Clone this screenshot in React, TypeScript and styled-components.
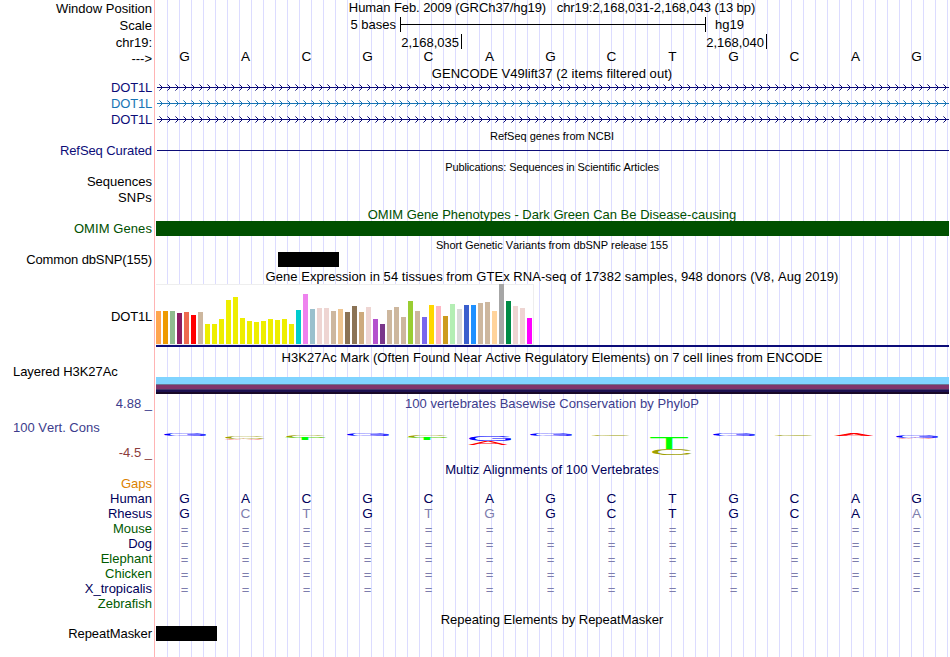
import React from 'react';
import styled, { createGlobalStyle } from 'styled-components';

const GlobalStyle = createGlobalStyle`
  body {
    margin: 0;
    background: #fff;
    overflow: hidden;
  }
`;

const Browser = styled.main`
  width: 949px;
  height: 657px;
  overflow: hidden;
  font: 13px 'Liberation Sans', Arial, sans-serif;
  font-kerning: none;
  color: #000;
  background:
    linear-gradient(#ffb4b4, #ffb4b4) 154px 0 / 1px 100% no-repeat,
    linear-gradient(#fff, #fff) 0 0 / 156px 100% no-repeat,
    linear-gradient(to right, #dcdcff 1px, transparent 1px) 11px 0 / 12px 100%;
`;

const Row = styled.div<{ $h: number }>`
  display: grid;
  grid-template-columns: 156px 793px;
  height: ${(p) => p.$h}px;
`;

const Label = styled.div<{ $lh?: number; $color?: string; $left?: boolean; $ls?: number }>`
  box-sizing: border-box;
  padding: ${(p) => (p.$left ? '0 0 0 13px' : '0 4px 0 0')};
  text-align: ${(p) => (p.$left ? 'left' : 'right')};
  line-height: ${(p) => p.$lh || 15}px;
  letter-spacing: ${(p) => p.$ls || 0}px;
  color: ${(p) => p.$color || '#000'};
  white-space: pre;
`;

const Title = styled.div<{ $lh?: number; $color?: string; $small?: boolean; $ls?: number }>`
  margin-left: -1px;
  text-align: center;
  font-size: ${(p) => (p.$small ? 11 : 13)}px;
  line-height: ${(p) => p.$lh || 15}px;
  letter-spacing: ${(p) => p.$ls || 0}px;
  color: ${(p) => p.$color || '#000'};
  white-space: pre;
`;

const ScaleBar = styled.div`
  display: flex;
  line-height: 15px;
`;

const ScaleText = styled.span<{ $w?: number }>`
  width: ${(p) => (p.$w ? p.$w + 'px' : 'auto')};
  text-align: right;
`;

const Ruler = styled.div`
  box-sizing: border-box;
  width: 306px;
  height: 15px;
  margin: 0 9px 0 4px;
  border: solid #000;
  border-width: 0 1px;
  background: linear-gradient(#000, #000) 0 7px / 100% 1px no-repeat;
`;

const Ticks = styled.div`
  display: flex;
`;

const Tick = styled.div<{ $w: number }>`
  box-sizing: border-box;
  width: ${(p) => p.$w}px;
  height: 15px;
  padding-right: 2px;
  border-right: 1px solid #000;
  line-height: 18px;
  text-align: right;
`;

const BaseGrid = styled.div<{ $lh: number; $color?: string; $size?: number }>`
  display: grid;
  grid-template-columns: repeat(13, 61px);
  margin-left: -2px;
  text-align: center;
  font-size: ${(p) => p.$size || 13.6}px;
  line-height: ${(p) => p.$lh}px;
  color: ${(p) => p.$color || '#000'};
`;

const Base = styled.span<{ $faded?: boolean }>`
  color: ${(p) => (p.$faded ? '#7d7dad' : 'inherit')};
`;

const IntronLine = styled.div`
  height: 1px;
  margin: 7px 0 0 1px;
  background: #0c0c78;
`;

const Block = styled.div<{ $x?: number; $w?: number; $color?: string }>`
  height: 15px;
  margin-left: ${(p) => p.$x || 0}px;
  width: ${(p) => p.$w || 793}px;
  background: ${(p) => p.$color || '#000'};
`;

const Expression = styled.div`
  height: 61px;
  border-bottom: 2px solid #0c0c78;
`;

const Bars = styled.div`
  box-sizing: border-box;
  display: flex;
  align-items: flex-end;
  gap: 2px;
  width: 378px;
  height: 61px;
  border: solid #eee;
  border-width: 1px 1px 1px 0;
  background: #fff;
`;

const Bar = styled.i<{ $h: number; $color: string }>`
  flex: none;
  width: 5px;
  height: ${(p) => p.$h}px;
  background: ${(p) => p.$color};
`;

const Layers = styled.div`
  height: 17px;
  margin-top: 12px;
  background: linear-gradient(
    #80d4ff 7px, #6b7894 7px, #6b7894 8px, #80356b 8px, #80356b 12px,
    #453768 12px, #453768 13px, #1c1050 13px, #1c1050 15px, #180828 15px
  );
`;

const SideLabels = styled.div`
  display: flex;
  flex-direction: column;
  gap: 10px;
  padding-top: 9px;
`;

const Drawing = styled.svg`
  display: block;
`;

const SEQUENCE = 'GACGCAGCTGCAG';
const RHESUS = 'GCTGTGGCTGCAA';

const GENES = ['#0c0c78', '#1874b4', '#0c0c78'];

const TISSUES: [number, string][] = [
  [33, '#ffa54f'], [33, '#ee9a00'], [33, '#8fbc8f'], [31, '#8b1c62'],
  [32, '#ee6a50'], [29, '#ff0000'], [32, '#cdb79e'], [20, '#eeee00'],
  [20, '#eeee00'], [25, '#eeee00'], [44, '#eeee00'], [47, '#eeee00'],
  [26, '#eeee00'], [23, '#eeee00'], [22, '#eeee00'], [23, '#eeee00'],
  [25, '#eeee00'], [24, '#eeee00'], [25, '#eeee00'], [20, '#eeee00'],
  [34, '#00cdcd'], [50, '#ee82ee'], [35, '#9ac0cd'], [36, '#eed5d2'],
  [36, '#eed5d2'], [33, '#cdb79e'], [35, '#eec591'], [32, '#8b7355'],
  [38, '#8b7355'], [32, '#cdaa7d'], [37, '#eed5d2'], [25, '#b452cd'],
  [20, '#7a378b'], [34, '#cdb79e'], [37, '#cdb79e'], [27, '#cdb79e'],
  [43, '#9acd32'], [33, '#cdb79e'], [27, '#7a67ee'], [39, '#ffd700'],
  [38, '#ffb6c1'], [28, '#cd9b1d'], [40, '#b4eeb4'], [35, '#d9d9d9'],
  [39, '#3a5fcd'], [39, '#1e90ff'], [41, '#cdb79e'], [42, '#cdb79e'],
  [33, '#ffd39b'], [60, '#a6a6a6'], [43, '#008b45'], [38, '#eed5d2'],
  [36, '#eed5d2'], [26, '#ff00ff'],
];

// letter, left, top, width, height inside the conservation track
const LOGO: [string, number, number, number, number][] = [
  ['G', 8, 23, 43, 2],
  ['C', 69, 25, 40, 2.8],
  ['A', 68, 27.8, 40, 1.3],
  ['C', 130, 24.6, 40, 2.3],
  ['T', 129, 26.8, 40, 2.2],
  ['G', 191, 23, 43, 2],
  ['C', 252, 24.6, 40, 2.3],
  ['T', 251, 26.8, 40, 2.2],
  ['G', 313, 25, 43, 5],
  ['A', 312, 30.3, 40, 3.7],
  ['G', 374, 23, 43, 2],
  ['C', 436, 24, 39, 1],
  ['T', 494, 26, 38, 12],
  ['C', 496, 38.2, 40, 5.8],
  ['G', 557, 23, 43, 2],
  ['C', 619, 24, 39, 1],
  ['A', 678, 23, 40, 1.9],
  ['G', 740, 25, 43, 2],
  ['A', 741, 27, 38, 1],
];

// ink box of each capital at font-size 100: left, width, rise, height
const INK: Record<string, [number, number, number, number]> = {
  G: [5, 67, 70, 71],
  C: [5, 64, 70, 71],
  A: [0, 67, 69, 69],
  T: [2, 57, 69, 69],
};

const LOGO_COLORS: Record<string, string> = {
  G: '#0000ff',
  C: '#a0a000',
  A: '#ff0000',
  T: '#00ff00',
};

const NAVY = '#00005a';
const GREEN = '#005a00';

const SPECIES: [string, string][] = [
  ['Mouse', GREEN],
  ['Dog', NAVY],
  ['Elephant', GREEN],
  ['Chicken', GREEN],
  ['X_tropicalis', NAVY],
];

const Gene = ({ color }: { color: string }) => (
  <Drawing width='793' height='16' shapeRendering='crispEdges' fill={color}>
    <rect x='1' y='7' width='792' height='1' />
    {Array.from({ length: 99 }, (_, i) => (
      <g key={i} transform={`translate(${3 + i * 8} 0)`}>
        <path d='M1 5h1v1h1v1h-1v-1h-1zM2 8h1v1h-1v1h-1v-1h1z' />
        <path d='M0 4h1v1h-1zM0 10h1v1h-1z' opacity='0.6' />
      </g>
    ))}
  </Drawing>
);

const Logo = () => (
  <Drawing width='793' height='51' fontSize='100'>
    {LOGO.map(([letter, x, y, w, h], i) => {
      const [left, width, rise, height] = INK[letter];
      const sx = w / width;
      const sy = h / height;
      return (
        <text
          key={i}
          fill={LOGO_COLORS[letter]}
          transform={`translate(${x - left * sx} ${y + rise * sy}) scale(${sx} ${sy})`}
        >
          {letter}
        </text>
      );
    })}
  </Drawing>
);

const App = () => {
  return (
    <>
      <GlobalStyle />
      <Browser>
        <Row $h={17}>
          <Label $lh={17}>Window Position</Label>
          <Title $ls={-0.075}>Human Feb. 2009 (GRCh37/hg19)   chr19:2,168,031-2,168,043 (13 bp)</Title>
        </Row>
        <Row $h={17}>
          <Label $lh={17}>Scale</Label>
          <ScaleBar>
            <ScaleText $w={240}>5 bases</ScaleText>
            <Ruler />
            <ScaleText>hg19</ScaleText>
          </ScaleBar>
        </Row>
        <Row $h={17}>
          <Label $lh={17}>chr19:</Label>
          <Ticks>
            <Tick $w={306}>2,168,035</Tick>
            <Tick $w={305}>2,168,040</Tick>
          </Ticks>
        </Row>
        <Row $h={15}>
          <Label>---&gt;</Label>
          <BaseGrid $lh={11}>
            {SEQUENCE.split('').map((b, i) => (
              <Base key={i}>{b}</Base>
            ))}
          </BaseGrid>
        </Row>
        <Row $h={14}>
          <span />
          <Title $ls={0.05}>GENCODE V49lift37 (2 items filtered out)</Title>
        </Row>
        {GENES.map((color, i) => (
          <Row key={i} $h={16}>
            <Label $color={color} $ls={-0.2}>DOT1L</Label>
            <Gene color={color} />
          </Row>
        ))}
        <Row $h={15}>
          <span />
          <Title $small $lh={16}>RefSeq genes from NCBI</Title>
        </Row>
        <Row $h={16}>
          <Label $color='#0c0c78' $ls={-0.08}>RefSeq Curated</Label>
          <IntronLine />
        </Row>
        <Row $h={15}>
          <span />
          <Title $small $lh={16} $ls={-0.1}>Publications: Sequences in Scientific Articles</Title>
        </Row>
        <Row $h={16}>
          <Label>Sequences</Label>
        </Row>
        <Row $h={16}>
          <Label $ls={0.2}>SNPs</Label>
        </Row>
        <Row $h={15}>
          <span />
          <Title $lh={17} $color='#005000'>OMIM Gene Phenotypes - Dark Green Can Be Disease-causing</Title>
        </Row>
        <Row $h={16}>
          <Label $color='#005000' $ls={0.08}>OMIM Genes</Label>
          <Block $color='#005000' />
        </Row>
        <Row $h={15}>
          <span />
          <Title $small $lh={17} $ls={-0.05}>Short Genetic Variants from dbSNP release 155</Title>
        </Row>
        <Row $h={16}>
          <Label $ls={-0.12}>Common dbSNP(155)</Label>
          <Block $x={122} $w={61} />
        </Row>
        <Row $h={16}>
          <span />
          <Title $lh={17} $ls={0.055}>Gene Expression in 54 tissues from GTEx RNA-seq of 17382 samples, 948 donors (V8, Aug 2019)</Title>
        </Row>
        <Row $h={66}>
          <Label $lh={65} $ls={-0.2}>DOT1L</Label>
          <Expression>
            <Bars>
              {TISSUES.map(([h, color], i) => (
                <Bar key={i} $h={h} $color={color} />
              ))}
            </Bars>
          </Expression>
        </Row>
        <Row $h={15}>
          <span />
          <Title $ls={0.03}>H3K27Ac Mark (Often Found Near Active Regulatory Elements) on 7 cell lines from ENCODE</Title>
        </Row>
        <Row $h={31}>
          <Label $left $lh={13} $ls={-0.05}>Layered H3K27Ac</Label>
          <Layers />
        </Row>
        <Row $h={15}>
          <Label $color='#3c3c8c'>4.88 _</Label>
          <Title $color='#3c3c8c' $ls={0.04}>100 vertebrates Basewise Conservation by PhyloP</Title>
        </Row>
        <Row $h={50}>
          <SideLabels>
            <Label $left $color='#3c3c8c'>100 Vert. Cons</Label>
            <Label $color='#8c3c3c'>-4.5 _</Label>
          </SideLabels>
          <Logo />
        </Row>
        <Row $h={15}>
          <span />
          <Title $lh={17} $color={NAVY} $ls={0.03}>Multiz Alignments of 100 Vertebrates</Title>
        </Row>
        <Row $h={15}>
          <Label $color='#dc8200'>Gaps</Label>
        </Row>
        <Row $h={15}>
          <Label $color={NAVY}>Human</Label>
          <BaseGrid $lh={15} $color={NAVY}>
            {SEQUENCE.split('').map((b, i) => (
              <Base key={i}>{b}</Base>
            ))}
          </BaseGrid>
        </Row>
        <Row $h={15}>
          <Label $color={NAVY}>Rhesus</Label>
          <BaseGrid $lh={15} $color={NAVY}>
            {RHESUS.split('').map((b, i) => (
              <Base key={i} $faded={b !== SEQUENCE[i]}>{b}</Base>
            ))}
          </BaseGrid>
        </Row>
        {SPECIES.map(([name, color]) => (
          <Row key={name} $h={15}>
            <Label $color={color}>{name}</Label>
            <BaseGrid $lh={18} $size={13}>
              {SEQUENCE.split('').map((_, i) => (
                <Base key={i} $faded>=</Base>
              ))}
            </BaseGrid>
          </Row>
        ))}
        <Row $h={15}>
          <Label $color={GREEN}>Zebrafish</Label>
        </Row>
        <Row $h={15}>
          <span />
          <Title $lh={17}>Repeating Elements by RepeatMasker</Title>
        </Row>
        <Row $h={16}>
          <Label $ls={-0.06}>RepeatMasker</Label>
          <Block $w={61} />
        </Row>
      </Browser>
    </>
  );
};

export default App;
